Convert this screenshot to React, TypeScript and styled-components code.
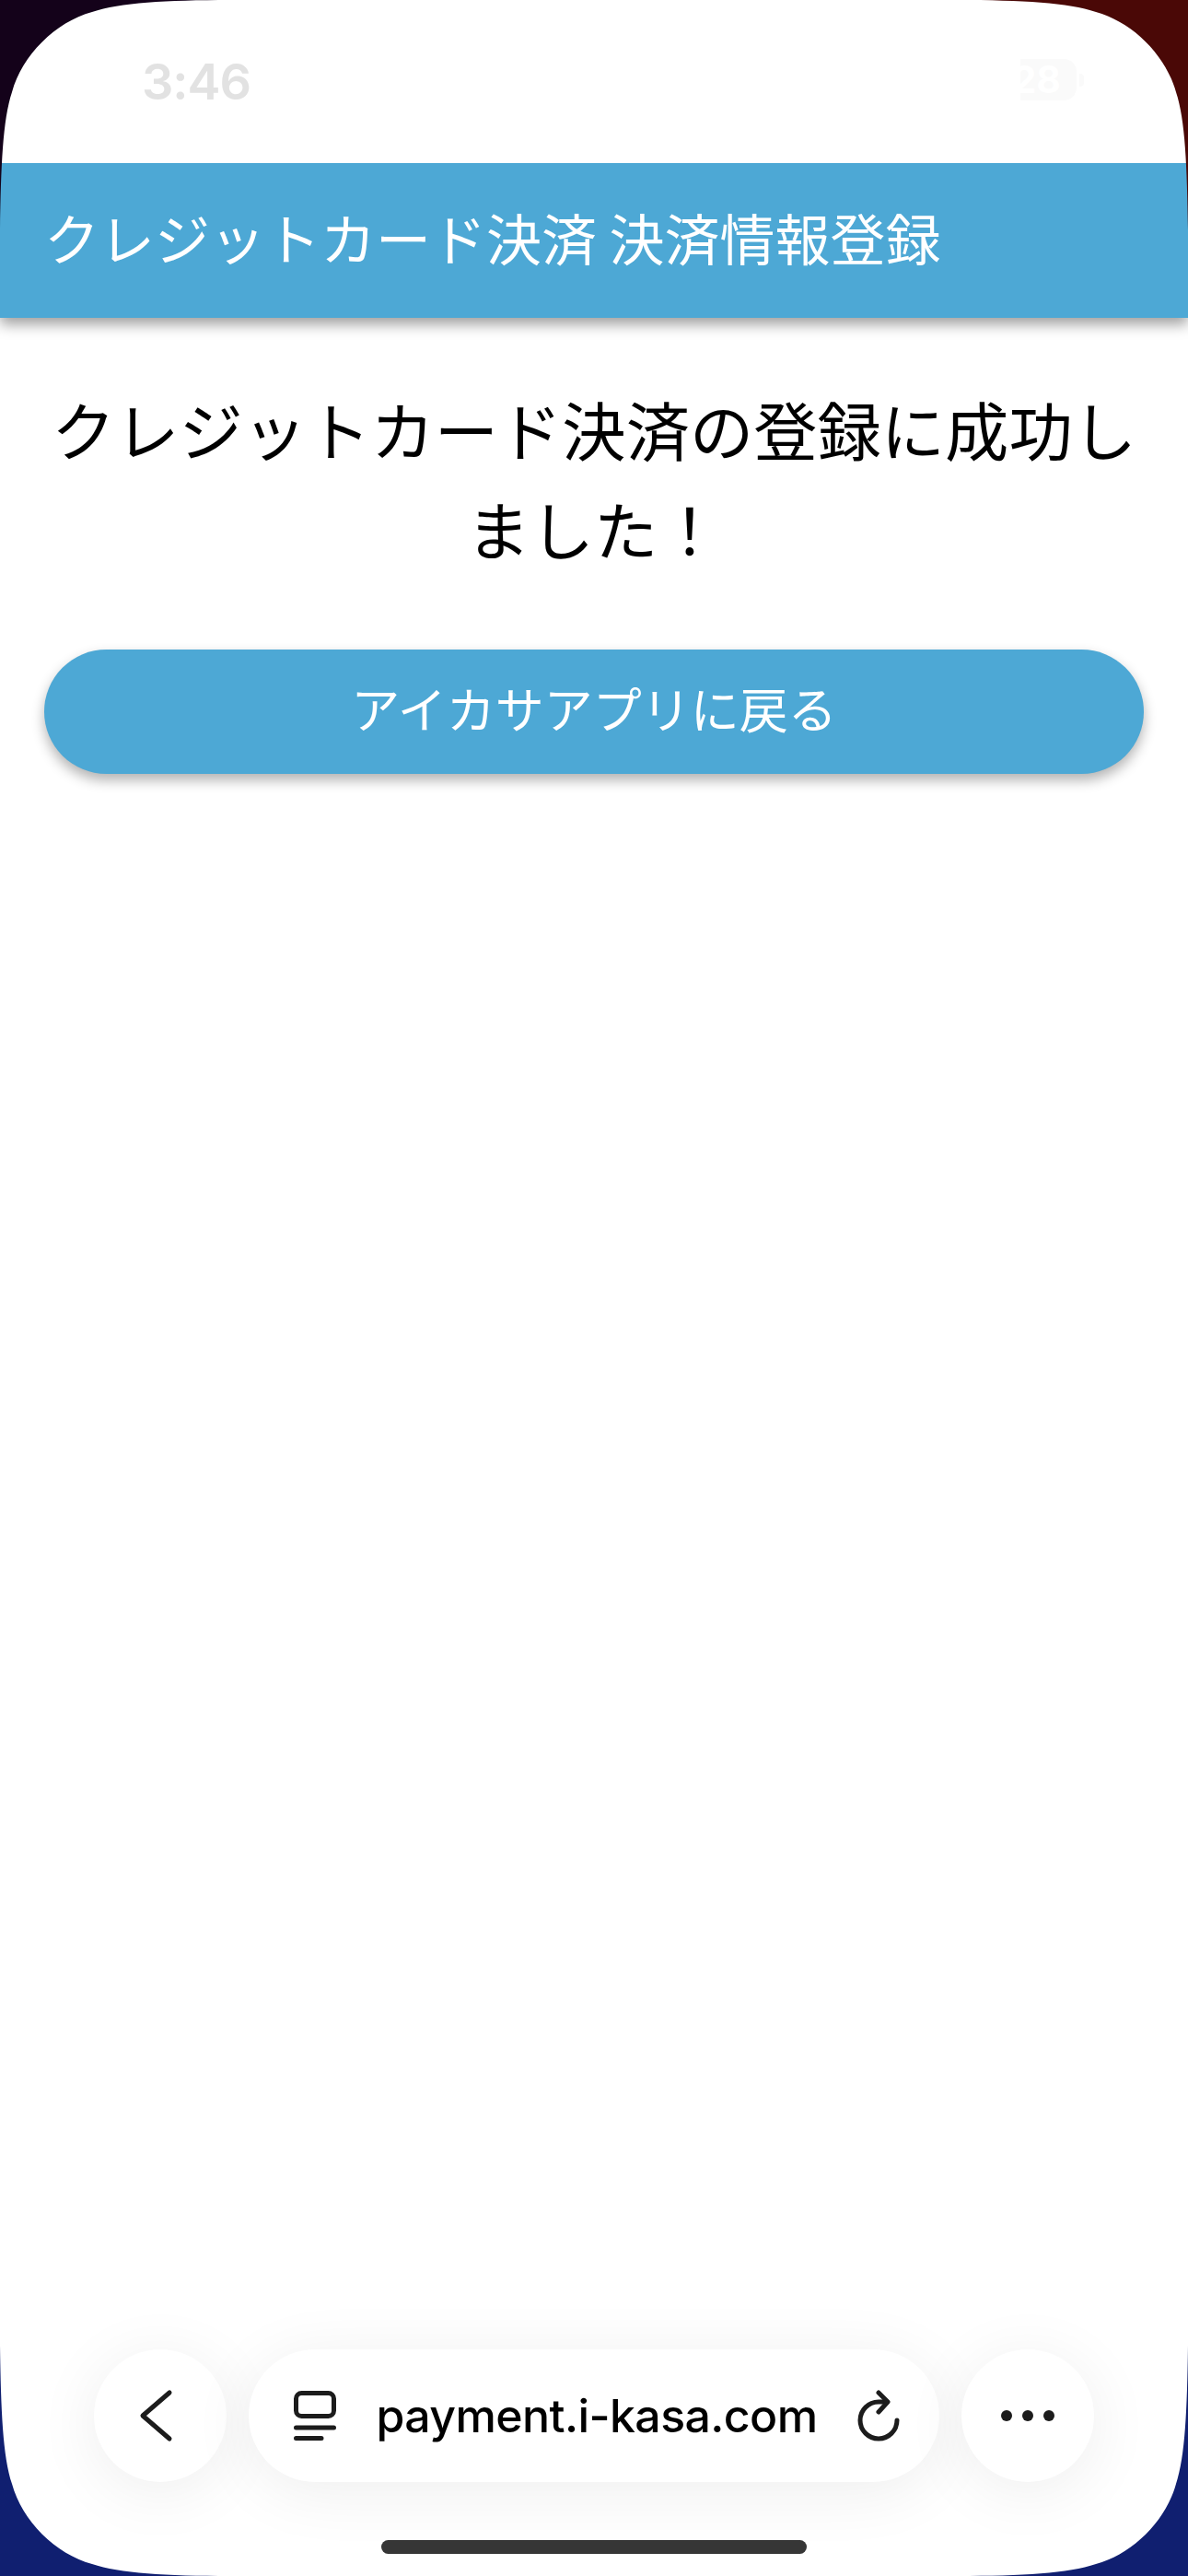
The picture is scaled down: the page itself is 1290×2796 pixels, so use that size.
import styled, { createGlobalStyle, css } from "styled-components";

const GlobalStyle = createGlobalStyle`
  html, body {
    margin: 0;
    padding: 0;
    background: #fff;
  }
`;

const jaFont = `"Noto Sans CJK JP", "Liberation Sans", sans-serif`;

const Screen = styled.div`
  position: relative;
  width: 1290px;
  height: 2796px;
  overflow: hidden;
  background: #fff;
  display: flex;
  flex-direction: column;
`;

const StatusBar = styled.div`
  height: 177px;
  box-sizing: border-box;
  padding: 64px 113px 0 154px;
  display: flex;
  justify-content: space-between;
  align-items: flex-start;
`;

const Clock = styled.span`
  font-family: Inter, "Liberation Sans", sans-serif;
  font-size: 54px;
  font-weight: 600;
  line-height: 50px;
  letter-spacing: -1px;
  color: #e2e2e2;
`;

const Battery = styled.div`
  display: flex;
  align-items: center;
  gap: 3px;
`;

const BatteryBody = styled.div`
  width: 61px;
  height: 45px;
  border-radius: 0 14px 14px 0;
  background: #fafafa;
  overflow: hidden;
  display: flex;
  justify-content: flex-end;
  align-items: center;
  padding-right: 17px;
  box-sizing: border-box;
  font-family: Inter, "Liberation Sans", sans-serif;
  font-size: 41px;
  font-weight: 700;
  line-height: 45px;
  color: #fff;
`;

const BatteryNub = styled.div`
  width: 5px;
  height: 14px;
  border-radius: 0 4px 4px 0;
  background: #fafafa;
`;

const Header = styled.header`
  position: relative;
  height: 168px;
  box-sizing: border-box;
  padding: 0 0 10px 48px;
  display: flex;
  align-items: center;
  background: #4da8d5;
  box-shadow: 0 7px 14px rgba(0, 0, 0, 0.38);
  clip-path: inset(0 0 -40px 0);
  font-family: ${jaFont};
  font-size: 60px;
  font-weight: 400;
  color: #fff;
`;

const Main = styled.main`
  flex: 1;
  padding: 66px 48px 0;
  font-family: ${jaFont};
`;

const Message = styled.h1`
  margin: 0 0 78px;
  font-size: 69.3px;
  font-weight: 400;
  line-height: 108px;
  text-align: center;
  color: #000;
`;

const BackButton = styled.button`
  display: block;
  width: 100%;
  height: 135px;
  border: 0;
  padding: 0 0 10px;
  border-radius: 68px;
  background: #4da8d5;
  box-shadow: 0 7px 14px rgba(0, 0, 0, 0.3);
  font-family: inherit;
  font-size: 53px;
  font-weight: 400;
  color: #fff;
`;

const BrowserBar = styled.div`
  padding: 0 102px;
  display: flex;
  gap: 24px;
`;

const pill = css`
  height: 144px;
  background: #fff;
  box-shadow: 0 10px 70px rgba(0, 0, 0, 0.07);
  display: flex;
  align-items: center;
`;

const RoundButton = styled.div`
  ${pill}
  width: 144px;
  border-radius: 50%;
  justify-content: center;
`;

const AddressPill = styled.div`
  ${pill}
  flex: 1;
  border-radius: 72px;
  padding: 0 43px 0 49px;
  justify-content: space-between;
`;

const Url = styled.span`
  font-family: Inter, "Liberation Sans", sans-serif;
  font-size: 50px;
  font-weight: 500;
  letter-spacing: -0.6px;
  color: #000;
`;

const Icon = styled.svg`
  display: block;
  flex: none;
  fill: none;
  stroke: #1c1c1c;
  stroke-width: 5;
  stroke-linecap: round;
  stroke-linejoin: round;
`;

const DotsIcon = styled.svg`
  display: block;
  flex: none;
  fill: #1c1c1c;
`;

const HomeZone = styled.div`
  height: 102px;
  box-sizing: border-box;
  padding-top: 63px;
  display: flex;
  justify-content: center;
`;

const HomeBar = styled.div`
  width: 462px;
  height: 15px;
  border-radius: 8px;
  background: #363636;
`;

type CornerSpot = "tl" | "tr" | "bl" | "br";

const spotStyles: Record<CornerSpot, ReturnType<typeof css>> = {
  tl: css`top: 0; left: 0;`,
  tr: css`top: 0; right: 0; transform: scaleX(-1);`,
  bl: css`bottom: 0; left: 0; transform: scaleY(-1);`,
  br: css`bottom: 0; right: 0; transform: scale(-1, -1);`,
};

const CornerShape = styled.svg<{ $spot: CornerSpot; $color: string }>`
  position: absolute;
  width: 250px;
  height: 250px;
  fill: ${(p) => p.$color};
  ${(p) => spotStyles[p.$spot]}
`;

function Corner({ spot, color }: { spot: CornerSpot; color: string }) {
  return (
    <CornerShape $spot={spot} $color={color} viewBox="0 0 250 250">
      <path d="M0 0H250C180 0 130 3 100 13C60 24 24 60 13 100C3 130 1 180 0 250Z" />
    </CornerShape>
  );
}

export default function App() {
  return (
    <Screen lang="ja">
      <GlobalStyle />
      <StatusBar>
        <Clock>3:46</Clock>
        <Battery>
          <BatteryBody>28</BatteryBody>
          <BatteryNub />
        </Battery>
      </StatusBar>
      <Header>クレジットカード決済 決済情報登録</Header>
      <Main>
        <Message>クレジットカード決済の登録に成功しました！</Message>
        <BackButton>アイカサアプリに戻る</BackButton>
      </Main>
      <BrowserBar>
        <RoundButton>
          <Icon width="46" height="60" viewBox="0 0 46 60">
            <path d="M33 5L4 30L33 55" />
          </Icon>
        </RoundButton>
        <AddressPill>
          <Icon width="46" height="54" viewBox="0 0 46 54">
            <rect x="2.5" y="2.5" width="41" height="25" rx="6" />
            <path d="M2.5 40H43.5M2.5 51.5H30" />
          </Icon>
          <Url>payment.i-kasa.com</Url>
          <Icon width="46" height="56" viewBox="0 0 46 56">
            <path d="M43 33A20 20 0 1 1 23 13H32" />
            <path d="M23 3L33 13L23 24" />
          </Icon>
        </AddressPill>
        <RoundButton>
          <DotsIcon width="58" height="12" viewBox="0 0 58 12">
            <circle cx="6" cy="6" r="6" />
            <circle cx="29" cy="6" r="6" />
            <circle cx="52" cy="6" r="6" />
          </DotsIcon>
        </RoundButton>
      </BrowserBar>
      <HomeZone>
        <HomeBar />
      </HomeZone>
      <Corner spot="tl" color="#14021a" />
      <Corner spot="tr" color="#4a0806" />
      <Corner spot="bl" color="#101f70" />
      <Corner spot="br" color="#101f70" />
    </Screen>
  );
}
